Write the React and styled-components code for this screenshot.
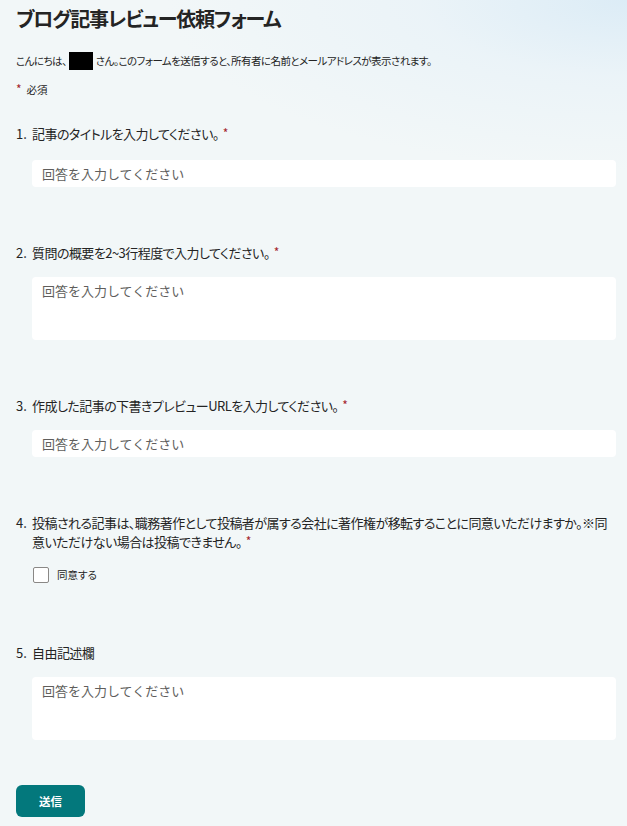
import React from "react";
import styled, { createGlobalStyle } from "styled-components";

const Global = createGlobalStyle`
  html, body { margin: 0; padding: 0; }
  body {
    background: #f2f7f8;
    font-family: "Noto Sans CJK JP", "Noto Sans", sans-serif;
    color: #242424;
  }
`;

const FONT = `"Noto Sans CJK JP", "Noto Sans", sans-serif`;

const Page = styled.div`
  min-height: 826px;
  box-sizing: border-box;
  padding: 5px 11px 40px 16px;
  background:
    radial-gradient(ellipse 460px 170px at 100% 0%, #dcecf6 0%, rgba(232, 242, 248, 0.7) 45%, rgba(242, 247, 248, 0) 100%),
    #f2f7f8;
`;

const Title = styled.h1`
  margin: 0;
  font-family: ${FONT};
  font-size: 20px;
  line-height: 28px;
  font-weight: 700;
  letter-spacing: -1.2px;
  font-feature-settings: "palt";
  color: #242424;
`;

const Intro = styled.p`
  margin: 19px 0 0;
  font-size: 10.5px;
  line-height: 16px;
  letter-spacing: -0.55px;
  font-feature-settings: "palt";
  display: flex;
  align-items: center;
`;

const Redacted = styled.span`
  display: inline-block;
  width: 24px;
  height: 18px;
  background: #000;
  margin: 0 3px 0 2px;
`;

const Required = styled.div`
  margin-top: 12px;
  font-size: 10.5px;
  line-height: 16px;
  font-feature-settings: "palt";
  display: flex;
  align-items: center;
  gap: 5px;
`;

const Star = styled.span`
  color: #a4262c;
  margin-left: ${(p) => p.$ml ?? 4}px;
  font-size: 12px;
  letter-spacing: 0;
  position: relative;
  top: -1px;
`;

const Form = styled.form`
  margin-top: 26px;
  display: flex;
  flex-direction: column;
`;

const Question = styled.section`
  display: flex;
  flex-direction: column;
  margin-top: ${(p) => p.$gap ?? 0}px;
`;

const Label = styled.div`
  display: flex;
  font-size: 13px;
  line-height: 19px;
  letter-spacing: -0.55px;
  font-feature-settings: "palt";
  color: #242424;
`;

const Num = styled.span`
  flex: 0 0 16px;
  letter-spacing: 0;
`;

const LabelText = styled.span`
  flex: 1;
`;

const fieldBase = `
  display: block;
  box-sizing: border-box;
  margin-left: 16px;
  width: calc(100% - 16px);
  border: none;
  outline: none;
  border-radius: 4px;
  background: #fff;
  padding: 0 10px;
  font-family: ${FONT};
  font-size: 13px;
  line-height: 16px;
  color: #242424;
  &::placeholder { color: #605e5c; opacity: 1; }
`;

const TextInput = styled.input`
  ${fieldBase}
  margin-top: ${(p) => p.$mt ?? 15}px;
  height: 27px;
`;

const TextArea = styled.textarea`
  ${fieldBase}
  margin-top: 15px;
  height: 63px;
  padding-top: 6px;
  resize: none;
`;

const ChoiceRow = styled.label`
  display: flex;
  align-items: center;
  height: 20px;
  margin: 13.5px 0 0 17px;
  gap: 8px;
  font-size: 10.5px;
  font-feature-settings: "palt";
  color: #242424;
`;

const Check = styled.input`
  appearance: none;
  margin: 0;
  width: 16px;
  height: 16px;
  box-sizing: border-box;
  border: 1.5px solid #8a8886;
  border-radius: 2px;
  background: #fff;
`;

const SubmitButton = styled.button`
  margin-top: 45px;
  align-self: flex-start;
  width: 69px;
  height: 32px;
  border: none;
  border-radius: 6px;
  background: #03787c;
  color: #fff;
  font-family: ${FONT};
  font-size: 11.5px;
  font-weight: 700;
  cursor: pointer;
`;

const PH = "回答を入力してください";

export default function App() {
  return (
    <>
      <Global />
      <Page>
        <Title>ブログ記事レビュー依頼フォーム</Title>
        <Intro>
          こんにちは、<Redacted />さん。このフォームを送信すると、所有者に名前とメールアドレスが表示されます。
        </Intro>
        <Required>
          <Star $ml={0}>*</Star>必須
        </Required>
        <Form onSubmit={(e) => e.preventDefault()}>
          <Question>
            <Label>
              <Num>1.</Num>
              <LabelText>
                記事のタイトルを入力してください。<Star>*</Star>
              </LabelText>
            </Label>
            <TextInput $mt={17} placeholder={PH} />
          </Question>
          <Question $gap={56}>
            <Label>
              <Num>2.</Num>
              <LabelText>
                質問の概要を2~3行程度で入力してください。<Star>*</Star>
              </LabelText>
            </Label>
            <TextArea placeholder={PH} />
          </Question>
          <Question $gap={56}>
            <Label>
              <Num>3.</Num>
              <LabelText>
                作成した記事の下書きプレビューURLを入力してください。<Star>*</Star>
              </LabelText>
            </Label>
            <TextInput placeholder={PH} />
          </Question>
          <Question $gap={56}>
            <Label>
              <Num>4.</Num>
              <LabelText>
                投稿される記事は、職務著作として投稿者が属する会社に著作権が移転することに同意いただけますか。※同意いただけない場合は投稿できません。<Star>*</Star>
              </LabelText>
            </Label>
            <ChoiceRow>
              <Check type="checkbox" />
              同意する
            </ChoiceRow>
          </Question>
          <Question $gap={58}>
            <Label>
              <Num>5.</Num>
              <LabelText>自由記述欄</LabelText>
            </Label>
            <TextArea placeholder={PH} />
          </Question>
          <SubmitButton type="submit">送信</SubmitButton>
        </Form>
      </Page>
    </>
  );
}
